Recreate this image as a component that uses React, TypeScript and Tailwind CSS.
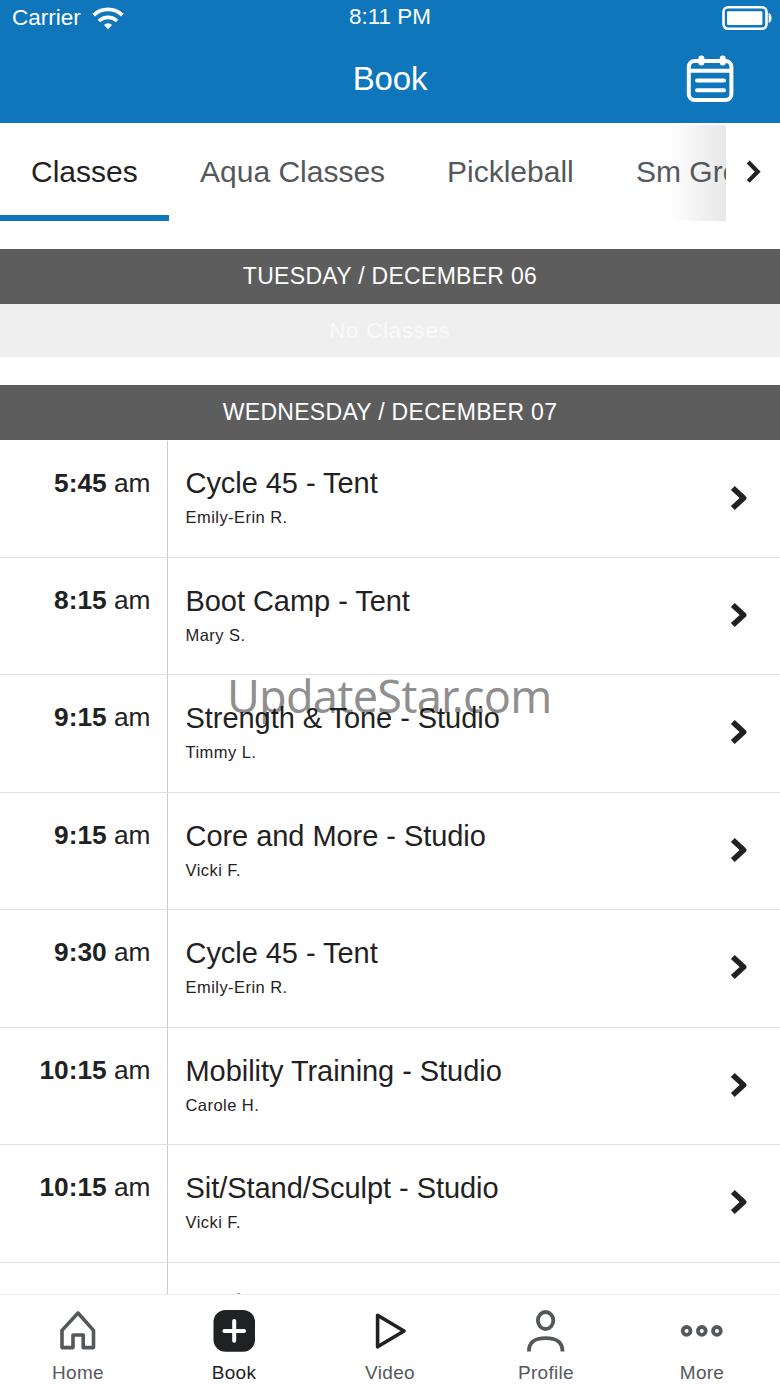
import React, { useState } from 'react';

interface ClassItem {
    time: string;
    title: string;
    instructor: string;
}

const tabs = [
    { label: 'Classes', box: 'w-[169px]' },
    { label: 'Aqua Classes', box: 'w-[247px]' },
    { label: 'Pickleball', box: 'w-[189px]' },
    { label: 'Sm Group', box: 'w-[200px]' },
];

const classes: ClassItem[] = [
    { time: '5:45', title: 'Cycle 45 - Tent', instructor: 'Emily-Erin R.' },
    { time: '8:15', title: 'Boot Camp - Tent', instructor: 'Mary S.' },
    { time: '9:15', title: 'Strength & Tone - Studio', instructor: 'Timmy L.' },
    { time: '9:15', title: 'Core and More - Studio', instructor: 'Vicki F.' },
    { time: '9:30', title: 'Cycle 45 - Tent', instructor: 'Emily-Erin R.' },
    { time: '10:15', title: 'Mobility Training - Studio', instructor: 'Carole H.' },
    { time: '10:15', title: 'Sit/Stand/Sculpt - Studio', instructor: 'Vicki F.' },
];

const WifiIcon = () => (
    <svg width="32" height="24" viewBox="0 0 32 24" fill="none" stroke="white" strokeWidth="3.8">
        <path d="M1.6 9.2A20.5 20.5 0 0 1 30.4 9.2" />
        <path d="M7 15A12.8 12.8 0 0 1 25 15" />
        <path d="M16 23.2l-4-4.2a5.6 5.6 0 0 1 8 0z" fill="white" stroke="none" />
    </svg>
);

const BatteryIcon = () => (
    <svg width="52" height="26" viewBox="0 0 52 26" fill="white">
        <rect x="1.5" y="2.3" width="43" height="21.5" rx="4.5" fill="none" stroke="white" strokeWidth="2.6" />
        <rect x="5" y="6.2" width="35.4" height="13.8" rx="1.2" />
        <path d="M46.600 8c1.800 .4 3 2.400 3 5s-1.200 4.600-3 5z" />
    </svg>
);

const CalendarIcon = () => (
    <svg width="48" height="48" viewBox="0 0 48 48" fill="none" stroke="white" strokeWidth="4" strokeLinecap="round">
        <rect x="2.800" y="6" width="42.600" height="39" rx="6" />
        <path d="M2.800 15.800h42.600" strokeLinecap="butt" />
        <path d="M11 25.500h27M11 35.200h27" />
        <path d="M15.400 3.500v4M36.700 3.500v4" strokeWidth="6" />
    </svg>
);

const HomeIcon = () => (
    <svg width="44" height="44" viewBox="0 0 44 44" fill="none" stroke="currentColor" strokeWidth="3.600" strokeLinejoin="round">
        <path d="M22 4L37.500 21.400V38.600H27.200V26H17V38.600H6V21.400z" />
    </svg>
);

const BookIcon = () => (
    <svg width="44" height="44" viewBox="0 0 44 44">
        <rect x="1.500" y="1" width="41.500" height="41.700" rx="12" fill="#1f2122" />
        <path d="M22.200 12.100v19.600M12.400 21.900h19.600" stroke="white" strokeWidth="4" strokeLinecap="round" />
    </svg>
);

const VideoIcon = () => (
    <svg width="44" height="44" viewBox="0 0 44 44" fill="none" stroke="#1f2122" strokeWidth="3.600" strokeLinejoin="round">
        <path d="M9.600 6.200L36 22L9.600 37.800z" />
    </svg>
);

const ProfileIcon = () => (
    <svg width="44" height="44" viewBox="0 0 44 44" fill="none" stroke="currentColor" strokeWidth="3.800">
        <ellipse cx="21.600" cy="11.500" rx="7.700" ry="8.500" />
        <path d="M4.900 42.500C4.900 33.400 10 29.200 21.600 29.200S38.500 33.400 38.500 42.500" />
    </svg>
);

const MoreIcon = () => (
    <svg width="44" height="44" viewBox="0 0 44 44" fill="none" stroke="currentColor" strokeWidth="3.800">
        <circle cx="6.600" cy="21.900" r="3.900" />
        <circle cx="21.800" cy="21.900" r="3.900" />
        <circle cx="36.900" cy="21.900" r="3.900" />
    </svg>
);

const navItems = [
    { label: 'Home', icon: <HomeIcon /> },
    { label: 'Book', icon: <BookIcon /> },
    { label: 'Video', icon: <VideoIcon /> },
    { label: 'Profile', icon: <ProfileIcon /> },
    { label: 'More', icon: <MoreIcon /> },
];

const DayHeader = ({ children }: { children: React.ReactNode }) => (
    <h2 className="flex h-[55px] shrink-0 items-center justify-center bg-[#5d5d5d] text-[23px] tracking-[0.3px] text-white">
        {children}
    </h2>
);

const ClassRow = ({ item }: { item: ClassItem }) => (
    <li className="flex h-[117.45px] shrink-0 border-b border-[#dfe2e4]">
        <div className="w-[168px] shrink-0 border-r border-[#c9cdd0] pr-[16.5px] pt-[26px] text-right text-[26.300px] leading-[32px]">
            {item.time && <><b>{item.time}</b> am</>}
        </div>
        <div className="flex-1 pl-[17.5px] pt-[25.8px]">
            <h3 className="text-[29px] leading-[34px] tracking-[-0.05px]">{item.title}</h3>
            <p className="mt-[7px] text-[16.5px] leading-5 tracking-[0.45px]">{item.instructor}</p>
        </div>
        <svg className="mr-[30px] mt-[43px]" width="20" height="28" viewBox="0 0 20 28" fill="none" stroke="#1f2122" strokeWidth="5.600" strokeLinejoin="round">
            <path d="M2.800 4L13.600 14L2.800 24" />
        </svg>
    </li>
);

const App: React.FC = () => {
    const [activeTab, setActiveTab] = useState('Classes');
    const [activeNav, setActiveNav] = useState('Book');

    return (
        <div className="relative flex h-[1387px] w-[780px] flex-col overflow-hidden bg-white font-['Liberation_Sans',Arial,sans-serif] text-[#1f2122]">
            <header className="h-[123px] shrink-0 bg-[#0f76bb] text-white">
                <div className="grid h-9 grid-cols-3 text-[22.5px] leading-9">
                    <div className="flex pl-3">
                        <span>Carrier</span>
                        <span className="ml-[11px] mt-[6px]"><WifiIcon /></span>
                    </div>
                    <span className="text-center leading-[34px]">8:11 PM</span>
                    <span className="ml-auto mr-[6px] mt-[5px]"><BatteryIcon /></span>
                </div>
                <div className="grid grid-cols-3">
                    <h1 className="col-start-2 pt-[23px] text-center text-[33px] leading-10 tracking-[-0.2px]">Book</h1>
                    <button className="ml-auto mr-[46px] mt-[19px] h-12"><CalendarIcon /></button>
                </div>
            </header>

            <nav className="flex h-[126px] shrink-0">
                <div className="relative flex h-[98px] w-[726px] overflow-hidden">
                    {tabs.map(tab => (
                        <button
                            key={tab.label}
                            onClick={() => setActiveTab(tab.label)}
                            className={`${tab.box} relative z-10 h-[98px] shrink-0 whitespace-nowrap border-b-[6px] pl-[31px] pt-[5px] text-left text-[30px] ${
                                activeTab === tab.label ? 'border-[#0f76bb]' : 'border-transparent text-[#55585b]'
                            }`}
                        >
                            {tab.label}
                        </button>
                    ))}
                    <div className="absolute bottom-0 right-0 top-0.5 w-[58px] bg-gradient-to-r from-white to-[#e8e8e8]" />
                </div>
                <svg className="ml-[20px] mt-[36px]" width="18" height="26" viewBox="0 0 18 26" fill="none" stroke="#1f2122" strokeWidth="4.200">
                    <path d="M2.200 3L11.700 12.700L2.200 22.400" />
                </svg>
            </nav>

            <main className="flex min-h-0 flex-1 flex-col overflow-hidden">
                <DayHeader>TUESDAY / DECEMBER 06</DayHeader>
                <p className="mb-7 flex h-[53px] shrink-0 items-center justify-center bg-[#efefef] text-[22px] tracking-[0.9px] text-[#f9f9f9]">
                    No Classes
                </p>
                <DayHeader>WEDNESDAY / DECEMBER 07</DayHeader>
                <ul className="flex flex-col pt-[0.6px]">
                    {classes.map((item, i) => <ClassRow key={i} item={item} />)}
                    {/* next row, mostly hidden behind the tab bar */}
                    <li className="flex h-[117.45px] shrink-0">
                        <div className="w-[168px] shrink-0 border-r border-[#c9cdd0]" />
                        <h3 className="pl-[17.5px] pt-[25px] text-[29px] leading-[34px] text-[#8d8f90]">Cycle 45 - Tent</h3>
                    </li>
                </ul>
            </main>

            <footer className="z-10 grid h-[93px] shrink-0 grid-cols-5 border-t border-[#eeeeee] bg-white">
                {navItems.map(item => (
                    <button
                        key={item.label}
                        onClick={() => setActiveNav(item.label)}
                        className={`flex flex-col items-center pt-[14px] text-[19px] leading-6 tracking-[0.3px] ${
                            activeNav === item.label ? 'text-[#1f2122]' : 'text-[#55585b]'
                        }`}
                    >
                        {item.icon}
                        <span className="mt-2">{item.label}</span>
                    </button>
                ))}
            </footer>

            <div className="pointer-events-none absolute left-[227px] top-[664px] whitespace-nowrap font-['Noto_Sans','Open_Sans',sans-serif] text-[45px] leading-[64px] tracking-[-0.8px] text-black/45">
                UpdateStar.com
            </div>
        </div>
    );
};

export default App;
